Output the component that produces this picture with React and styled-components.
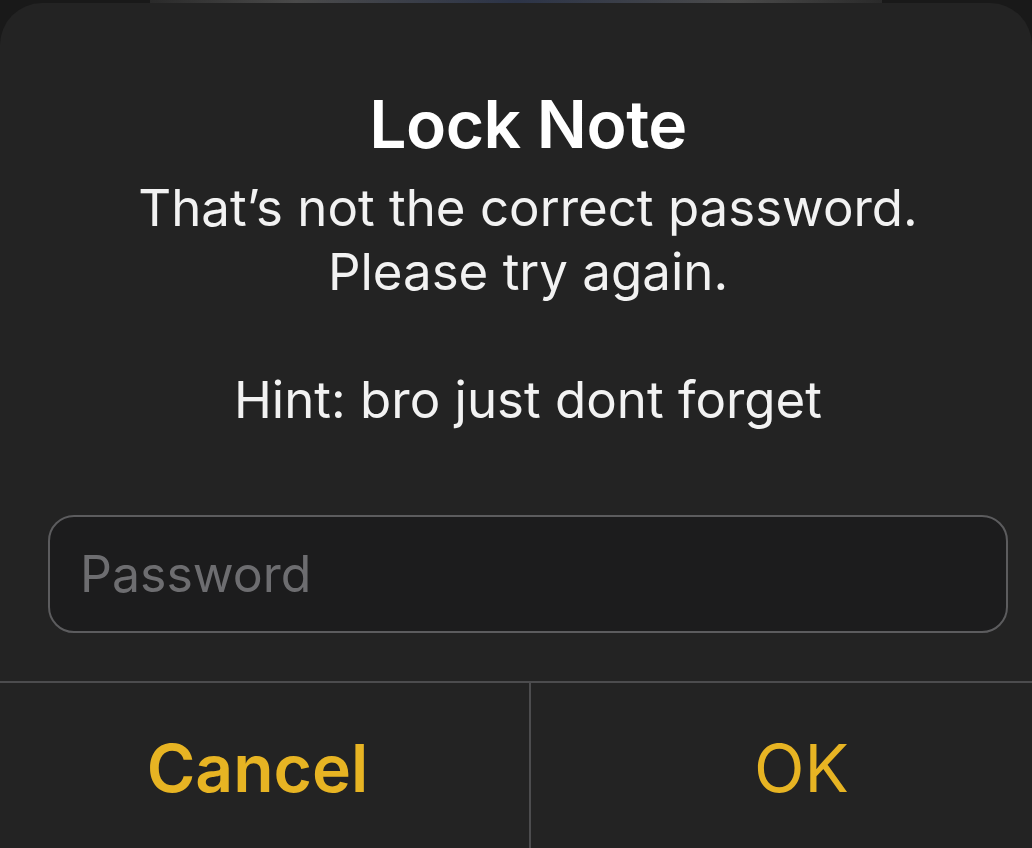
import styled, { createGlobalStyle } from "styled-components"

const GlobalStyle = createGlobalStyle`
  html, body {
    margin: 0;
    padding: 0;
    background: #191919;
    font-family: Inter, "Noto Sans", "Liberation Sans", sans-serif;
    -webkit-font-smoothing: antialiased;
  }
`

const Page = styled.div`
  width: 1032px;
  height: 848px;
  overflow: hidden;
  display: flex;
  flex-direction: column;
`

const TopStrip = styled.div`
  height: 3px;
  margin: 0 150px;
  background: linear-gradient(90deg, #2a2a2a, #4a4a4a 20%, #2c3448 50%, #4a4a4a 80%, #2a2a2a);
`

const Alert = styled.section`
  flex: 1;
  background: #232323;
  border-radius: 42px 42px 0 0;
  display: flex;
  flex-direction: column;
`

const Body = styled.div`
  padding: 85px 24px 0 48px;
  display: flex;
  flex-direction: column;
  align-items: center;
`

const Title = styled.h1`
  margin: 0;
  font-size: 66px;
  font-weight: 600;
  line-height: 72px;
  color: #fff;
  letter-spacing: -0.5px;
`

const Message = styled.p`
  margin: 16px 0 0;
  font-size: 51px;
  font-weight: 400;
  line-height: 64px;
  color: #f2f2f2;
  text-align: center;
  white-space: pre-line;
`

const PasswordField = styled.input`
  box-sizing: border-box;
  width: 100%;
  height: 118px;
  margin-top: 83px;
  padding: 0 30px;
  background: #1c1c1d;
  border: 2px solid #5c5c5e;
  border-radius: 26px;
  font-family: inherit;
  font-size: 50px;
  color: #fff;
  outline: none;

  &::placeholder {
    color: #6d6d70;
  }
`

const Actions = styled.div`
  margin-top: 48px;
  flex: 1;
  display: grid;
  grid-template-columns: 529px 1fr;
  border-top: 2px solid #4c4c4e;
`

const ActionButton = styled.button`
  background: transparent;
  border: none;
  border-left: ${(p) => (p.$divider ? "2px solid #4c4c4e" : "none")};
  padding: 4px ${(p) => (p.$divider ? "0" : "14px")} 0 ${(p) => (p.$divider ? "40px" : "0")};
  font-family: inherit;
  font-size: 66px;
  font-weight: ${(p) => (p.$bold ? 600 : 400)};
  color: #e7b423;
  cursor: pointer;
`

export default function App() {
  return (
    <Page>
      <GlobalStyle />
      <TopStrip />
      <Alert>
        <Body>
          <Title>Lock Note</Title>
          <Message>
            {"That’s not the correct password.\nPlease try again.\n\nHint: bro just dont forget"}
          </Message>
          <PasswordField type="password" placeholder="Password" />
        </Body>
        <Actions>
          <ActionButton $bold>Cancel</ActionButton>
          <ActionButton $divider>OK</ActionButton>
        </Actions>
      </Alert>
    </Page>
  )
}
